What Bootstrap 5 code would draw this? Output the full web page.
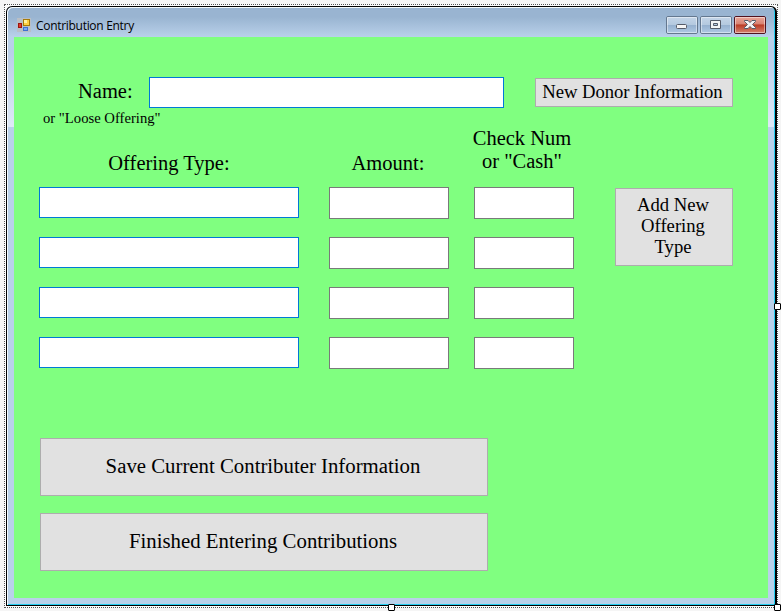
<!DOCTYPE html>
<html lang="en">
<head>
<meta charset="utf-8">
<title>Contribution Entry</title>
<link href="https://cdn.jsdelivr.net/npm/bootstrap@5.3.0/dist/css/bootstrap.min.css" rel="stylesheet">
<style>
body{width:781px;height:611px;background:#f5f5f5;overflow:hidden;font-family:"Liberation Serif","Times New Roman",serif;color:#000}
.designer{padding:4px;width:781px;height:611px}
.selection{width:774px;height:604px;border:1px dotted #555;padding:1px 1px 2px 1px;background:#fdfdfd}
.window{width:771px;height:600px;border:1px solid #000;border-right-width:2px;border-radius:6px 6px 0 0;padding:0 5px 6px 6px;
 box-shadow:inset 1px 1px #f4fbff,inset -1px -1px #22cdf0;
 background:linear-gradient(#99b4d1 0,#99b4d1 10px,#b9d1ea 30px,#b9cfe9 45px,#dfe9f7 120px,#b9d1ea 120px,#b9d1ea)}
.titlebar{height:30px;padding:1px 4px 0 4px;font:12px "Open Sans","Noto Sans",sans-serif}
.caption-buttons{margin-top:8px}
.titleicon{margin-top:10px}
.titletext{margin-left:5px;letter-spacing:-.3px;line-height:18px;padding-top:9px}
.canvas{width:754px;height:561px;background:#80ff80;margin-left:1px}
.fld{height:32px;border:1px solid #7a7a7a;border-radius:0;padding:0 4px;background:#fff}
.fld.pick{height:31px;border-color:#0078d7}
.fbtn{background:#e1e1e1;border:1px solid #adadad;border-radius:0;color:#000;padding:0 2px 2px 0;font-size:18.67px;line-height:21px}
.lbl{font-size:20.5px;line-height:23px;white-space:nowrap}
.namerow{height:82px;padding:40px 0 0 25px}
.namecap{width:110px;padding-left:39px;padding-top:3px}
.hint{font-size:14.67px;line-height:16px;padding-top:7px;margin-left:-35px}
.w-name{width:355px}
.donor{width:198px;height:29px;margin:1px 0 0 31px;letter-spacing:-.05px;padding-right:3px}
.entry{display:grid;grid-template-columns:290px 145px 141px 118px;grid-template-rows:68px 50px 50px 50px 50px;margin-left:25px;height:319px}
.col-type{grid-column:1;width:260px}
.col-amount{grid-column:2;width:120px}
.col-check{grid-column:3;width:100px}
.entry>.lbl{padding-top:33px}
.entry>.col-check.lbl{padding-top:8px;margin-left:-2px}
.entry>.col-amount.lbl{margin-left:-1px}
.add{grid-column:4;grid-row:2/4;height:78px;width:118px;margin-top:1px;padding-bottom:4px}
.actions{padding-left:26px;gap:17px}
.wide{width:448px;height:58px;font-size:20.8px;padding-bottom:4px}
.handle{position:absolute;width:7px;height:7px;background:#fff;border:1px solid #000;border-radius:1px}
.h-r{left:774px;top:303px}.h-b{left:388px;top:604px}.h-c{left:774px;top:604px}
</style>
</head>
<body>
<div class="designer position-relative">
 <div class="selection">
  <div class="window">
   <div class="titlebar d-flex">
    <svg class="titleicon" width="14" height="14" viewBox="0 0 14 14"><rect width="14" height="14" fill="#b9bfc6"/><rect x="1.500" y="5.500" width="3" height="4" fill="#e0392c" stroke="#9c140e"/><rect x="6.500" y="1.500" width="6" height="6" fill="#ffd042" stroke="#a67a08"/><rect x="7" y="2" width="3" height="3" fill="#fff0a0"/><rect x="6.500" y="9.500" width="4" height="3" fill="#79a9f5" stroke="#3f6fd0"/></svg>
    <div class="titletext">Contribution Entry</div>
    <svg class="ms-auto caption-buttons" width="101" height="19" viewBox="0 0 101 19">
     <defs><linearGradient id="g" x2="0" y2="1"><stop stop-color="#c5d6e8"/><stop offset=".48" stop-color="#b4c9df"/><stop offset=".5" stop-color="#95b0ce"/><stop offset="1" stop-color="#b0cae5"/></linearGradient>
     <linearGradient id="r" x2="0" y2="1"><stop stop-color="#e8a99d"/><stop offset=".46" stop-color="#d98170"/><stop offset=".48" stop-color="#b93a23"/><stop offset="1" stop-color="#d78674"/></linearGradient></defs>
     <g fill="url(#g)"><rect x="1.500" y=".5" width="31" height="17" rx="1.500" stroke="#64788f"/><rect x="35.500" y=".5" width="31" height="17" rx="1.500" stroke="#64788f"/></g>
     <rect x="69.500" y=".5" width="31" height="17" rx="1.500" fill="url(#r)" stroke="#50121f"/>
     <g fill="none" stroke="#fff" stroke-opacity=".45"><rect x="2.500" y="1.500" width="29" height="15"/><rect x="36.500" y="1.500" width="29" height="15"/><rect x="70.500" y="1.500" width="29" height="15"/></g>
     <rect x="11.500" y="8.500" width="10" height="4" rx="1" fill="#f5f5f5" stroke="#555b68"/>
     <path fill-rule="evenodd" d="M45.500 4.500h10v8h-10zM48.500 7.500v2h4v-2z" fill="#f5f5f5" stroke="#555b68"/>
     <path d="M79.500 4.500h3.500l2 2 2-2h3.500v1l-3 3 3 3v1h-3.500l-2-2-2 2h-3.500v-1l3-3-3-3z" fill="#f3f3f3" stroke="#555b68"/>
    </svg>
   </div>
   <div class="canvas">
    <div class="namerow d-flex align-items-start">
     <div class="namecap lbl">Name:<div class="hint">or "Loose Offering"</div></div>
     <input class="fld pick w-name" type="text" aria-label="Name">
     <button class="btn fbtn donor">New Donor Information</button>
    </div>
    <div class="entry">
     <div class="lbl col-type text-center">Offering Type:</div>
     <div class="lbl col-amount text-center">Amount:</div>
     <div class="lbl col-check text-center">Check Num<br>or "Cash"</div>
     <input class="fld pick col-type"><input class="fld col-amount"><input class="fld col-check">
     <button class="btn fbtn add">Add New<br>Offering<br>Type</button>
     <input class="fld pick col-type"><input class="fld col-amount"><input class="fld col-check">
     <input class="fld pick col-type"><input class="fld col-amount"><input class="fld col-check">
     <input class="fld pick col-type"><input class="fld col-amount"><input class="fld col-check">
    </div>
    <div class="actions d-flex flex-column">
     <button class="btn fbtn wide">Save Current Contributer Information</button>
     <button class="btn fbtn wide">Finished Entering Contributions</button>
    </div>
   </div>
  </div>
 </div>
 <span class="handle h-r"></span><span class="handle h-b"></span><span class="handle h-c"></span>
</div>
<script src="https://cdn.jsdelivr.net/npm/bootstrap@5.3.0/dist/js/bootstrap.bundle.min.js"></script>
</body>
</html>
